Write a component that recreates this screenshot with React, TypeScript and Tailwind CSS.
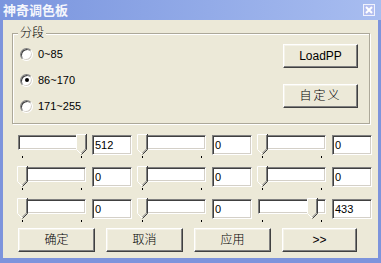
import React from 'react';

const SANS = "font-['Liberation_Sans','Noto_Sans_CJK_SC',sans-serif]";

// row values for the three sliders of each row, range 0..512
const ROWS = [
  [512, 0, 0],
  [0, 0, 0],
  [0, 0, 433],
];

function Btn({ children, className = '' }: { children: React.ReactNode; className?: string }) {
  return (
    <button
      type="button"
      className={`flex items-center justify-center bg-[#ece9d8] border border-t-white border-l-white border-r-[#404040] border-b-[#404040] shadow-[inset_-1px_-1px_0_#808080,inset_1px_1px_0_#f4f2e8] text-[12px] text-black ${className}`}
    >
      {children}
    </button>
  );
}

function Radio({ label, checked }: { label: string; checked?: boolean }) {
  return (
    <div className="flex items-center h-[26px] gap-[5px]">
      <span className="relative w-[13px] h-[13px] rounded-full bg-white border border-t-[#808080] border-l-[#808080] border-b-white border-r-white shadow-[inset_1px_1px_0_#404040,inset_-1px_-1px_0_#d4d0c8] flex items-center justify-center">
        {checked && <span className="w-[4px] h-[4px] rounded-full bg-black" />}
      </span>
      <span className="text-[11px] text-black leading-none">{label}</span>
    </div>
  );
}

function Thumb() {
  return (
    <svg width="11" height="21" viewBox="0 0 11 21">
      <polygon points="0,0 11,0 11,15.5 5.5,21 0,15.5" fill="#ece9d8" />
      <polyline points="0.5,15.5 0.5,0.5 10,0.5" fill="none" stroke="#ffffff" />
      <line x1="0.5" y1="15.5" x2="5" y2="20" stroke="#ffffff" />
      <polyline points="10.5,0 10.5,15.5 5.5,20.5" fill="none" stroke="#404040" />
      <polyline points="9.5,1 9.5,15 5.5,19" fill="none" stroke="#808080" />
    </svg>
  );
}

function Slider({ value, max = 512 }: { value: number; max?: number }) {
  const c = 4 + Math.round((value / max) * 59);
  return (
    <div className="relative w-[68px] h-[24px]">
      <div className="mt-[1px] w-[68px] h-[15px] bg-white border border-t-[#808080] border-l-[#808080] border-b-white border-r-white shadow-[inset_1px_1px_0_#404040,inset_-1px_-1px_0_#d4d0c8]" />
      <div className="absolute top-0" style={{ left: c - 5 }}>
        <Thumb />
      </div>
      <span className="absolute left-[4px] top-[22px] w-px h-[2px] bg-black" />
      <span className="absolute left-[63px] top-[22px] w-px h-[2px] bg-black" />
    </div>
  );
}

function Edit({ value }: { value: number }) {
  return (
    <div className="mt-[1px] w-[40px] h-[20px] bg-white border border-t-[#808080] border-l-[#808080] border-b-white border-r-white shadow-[inset_1px_1px_0_#404040,inset_-1px_-1px_0_#d4d0c8] flex items-center pl-[2px] text-[11px] text-black leading-none">
      {value}
    </div>
  );
}

export default function App() {
  return (
    <div className={`w-[381px] h-[263px] flex flex-col ${SANS}`}>
      <div className="h-[20px] flex items-center justify-between bg-gradient-to-r from-[#7a95de] to-[#a8bdf0] pl-[3px] pr-[6px]">
        <span className="text-[13px] font-bold text-[#f4f6fc] leading-none">神奇调色板</span>
        <span className="w-[12px] h-[12px] bg-[#b4bff0] border border-white/80 flex items-center justify-center">
          <svg width="8" height="8" viewBox="0 0 8 8">
            <path d="M1 1L7 7M7 1L1 7" stroke="#ffffff" strokeWidth="2" />
          </svg>
        </span>
      </div>

      <div className="flex-1 flex flex-col bg-[#ece9d8] border-x-[3px] border-b-[5px] border-[#7d94dc]">
        <div className="relative mt-[13px] ml-[9px] w-[358px] h-[91px] border border-[#aca899] shadow-[inset_1px_1px_0_#ffffff,1px_1px_0_#ffffff] flex justify-between pl-[7px] pr-[11px]">
          <span className="absolute left-[5px] top-[-8px] bg-[#ece9d8] px-[2px] text-[12px] leading-[14px] text-black font-light">分段</span>
          <div className="flex flex-col pt-[7px]">
            <Radio label="0~85" />
            <Radio label="86~170" checked />
            <Radio label="171~255" />
          </div>
          <div className="flex flex-col pt-[10px] gap-[16px]">
            <Btn className="w-[75px] h-[24px] text-[11px]">LoadPP</Btn>
            <Btn className="w-[75px] h-[24px] tracking-[2px] font-light">自定义</Btn>
          </div>
        </div>

        <div className="mt-[10px] ml-[15px] flex flex-col gap-[8px]">
          {ROWS.map((row, i) => (
            <div key={i} className="flex gap-[6px]">
              {row.map((v, j) => (
                <div key={j} className="flex gap-[6px]">
                  <Slider value={v} />
                  <Edit value={v} />
                </div>
              ))}
            </div>
          ))}
        </div>

        <div className="mt-[6px] ml-[15px] flex gap-[11px]">
          <Btn className="w-[77px] h-[24px] font-light">确定</Btn>
          <Btn className="w-[77px] h-[24px] font-light">取消</Btn>
          <Btn className="w-[77px] h-[24px] font-light">应用</Btn>
          <Btn className="w-[75px] h-[24px] text-[11px]">&gt;&gt;</Btn>
        </div>
      </div>
    </div>
  );
}
